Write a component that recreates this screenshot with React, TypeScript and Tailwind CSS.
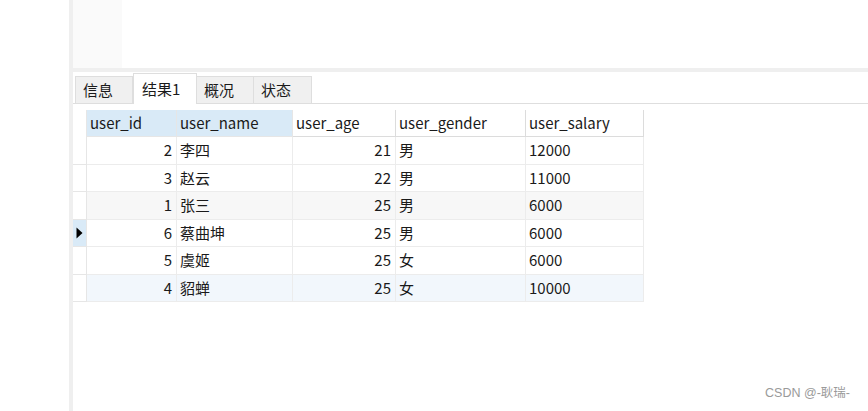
import React from 'react';

const columns = [
  { key: 'id', label: 'user_id', width: 'w-[90px]', align: 'right', selected: true },
  { key: 'name', label: 'user_name', width: 'w-[116px]', align: 'left', selected: true },
  { key: 'age', label: 'user_age', width: 'w-[103px]', align: 'right', selected: false },
  { key: 'gender', label: 'user_gender', width: 'w-[130px]', align: 'left', selected: false },
  { key: 'salary', label: 'user_salary', width: 'w-[118px]', align: 'left', selected: false },
];

const rows = [
  { id: '2', name: '李四', age: '21', gender: '男', salary: '12000', bg: 'bg-white' },
  { id: '3', name: '赵云', age: '22', gender: '男', salary: '11000', bg: 'bg-white' },
  { id: '1', name: '张三', age: '25', gender: '男', salary: '6000', bg: 'bg-[#f7f7f7]' },
  { id: '6', name: '蔡曲坤', age: '25', gender: '男', salary: '6000', bg: 'bg-white', current: true },
  { id: '5', name: '虞姬', age: '25', gender: '女', salary: '6000', bg: 'bg-white' },
  { id: '4', name: '貂蝉', age: '25', gender: '女', salary: '10000', bg: 'bg-[#f2f7fc]' },
];

const tabs = [
  { label: '信息', width: 'w-[58px]', active: false },
  { label: '结果1', width: 'w-[64px]', active: true },
  { label: '概况', width: 'w-[57px]', active: false },
  { label: '状态', width: 'w-[58px]', active: false },
];

const font = "font-['Microsoft_YaHei','Noto_Sans_CJK_SC',sans-serif]";

export default function App() {
  return (
    <div className={`flex h-[411px] w-[868px] bg-white text-[#1a1a1a] ${font}`}>
      <div className="w-[69px] shrink-0 bg-white" />
      <div className="w-[4px] shrink-0 bg-[#efefef]" />
      <div className="flex flex-1 flex-col">
        {/* top pane */}
        <div className="flex h-[68px]">
          <div className="w-[49px] bg-[#fafafa]" />
        </div>
        <div className="h-[4px] bg-[#efefef]" />

        {/* tab bar */}
        <div className="flex h-[32px] items-end border-b border-[#dedede] pl-[2px]">
          {tabs.map((t) =>
            t.active ? (
              <div
                key={t.label}
                className={`${t.width} -mb-px flex h-[31px] items-center border border-b-0 border-[#dedede] bg-white pl-[8px] text-[15px]`}
              >
                {t.label}
              </div>
            ) : (
              <div
                key={t.label}
                className={`${t.width} flex h-[27px] items-center border border-l-0 border-b-0 border-[#dedede] bg-[#f0f0f0] pl-[7px] text-[15px] first:border-l`}
              >
                {t.label}
              </div>
            )
          )}
        </div>

        {/* grid */}
        <div className="mt-[6px] flex flex-col items-start text-[15px]">
          <div className="flex h-[27px]">
            <div className="w-[14px] border-r border-[#e6e6e6] bg-white" />
            {columns.map((c) => (
              <div
                key={c.key}
                className={`${c.width} flex items-center border-b border-r ${
                  c.selected ? 'border-[#e6e6e6] bg-[#d9eaf7]' : 'border-[#dcdcdc] bg-white'
                } pl-[3px]`}
              >
                {c.label}
              </div>
            ))}
          </div>
          {rows.map((r, i) => (
            <div key={i} className={`flex h-[27.5px] ${r.bg}`}>
              <div
                className={`flex w-[14px] items-center border-b border-r border-[#e6e6e6] ${
                  r.current ? 'bg-[#d9eaf7]' : 'bg-white'
                }`}
              >
                {r.current && (
                  <svg width="7" height="12" viewBox="0 0 7 12" className="ml-[3px]">
                    <path d="M0.5 0.5 L6.5 6 L0.5 11.5 Z" fill="#000" />
                  </svg>
                )}
              </div>
              {columns.map((c) => (
                <div
                  key={c.key}
                  className={`${c.width} flex items-center border-b border-r border-[#ececec] ${
                    c.align === 'right' ? 'justify-end pr-[4px]' : 'pl-[3px]'
                  }`}
                >
                  {(r as any)[c.key]}
                </div>
              ))}
            </div>
          ))}
        </div>

        <div className="mt-auto flex justify-end pb-[8px] pr-[18px]">
          <span className="font-['Liberation_Sans','Noto_Sans_CJK_SC',sans-serif] text-[12.5px] text-[#9a9a9a]">
            CSDN @-耿瑞-
          </span>
        </div>
      </div>
    </div>
  );
}
